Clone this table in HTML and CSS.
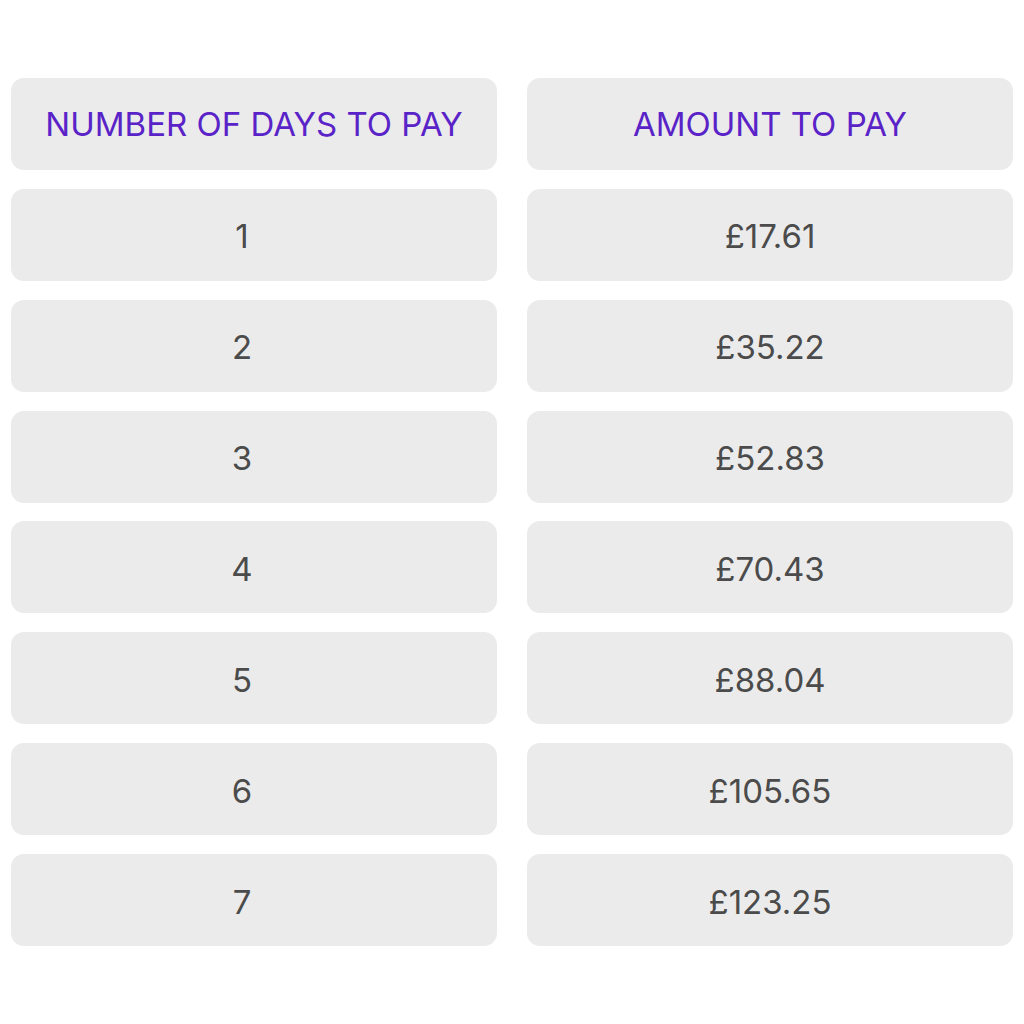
FILE: index.html
```html
<!DOCTYPE html>
<html lang="en">
<head>
<meta charset="utf-8">
<title>Payment table</title>
<link rel="stylesheet" href="styles.css">
</head>
<body>
<div class="table">
  <div class="cell head">NUMBER OF DAYS TO PAY</div>
  <div class="cell head">AMOUNT TO PAY</div>
  <div class="cell days">1</div>
  <div class="cell amt">£17.61</div>
  <div class="cell days">2</div>
  <div class="cell amt">£35.22</div>
  <div class="cell days">3</div>
  <div class="cell amt">£52.83</div>
  <div class="cell days">4</div>
  <div class="cell amt">£70.43</div>
  <div class="cell days">5</div>
  <div class="cell amt">£88.04</div>
  <div class="cell days">6</div>
  <div class="cell amt">£105.65</div>
  <div class="cell days">7</div>
  <div class="cell amt">£123.25</div>
</div>
</body>
</html>
```
FILE: styles.css
```css
html, body {
  margin: 0;
  padding: 0;
  background: #ffffff;
}
body {
  width: 1024px;
  height: 1024px;
  font-family: "Inter", "Noto Sans", sans-serif;
}
.table {
  display: grid;
  grid-template-columns: 486px 486px;
  grid-auto-rows: 92px;
  column-gap: 30px;
  row-gap: 18.86px;
  padding: 78px 0 0 11px;
}
.cell {
  background: #ebebeb;
  border-radius: 13px;
  display: flex;
  align-items: center;
  justify-content: center;
  color: #4b4b4b;
  font-size: 33px;
  font-weight: 400;
  padding-top: 3px;
  box-sizing: border-box;
}
.head {
  color: #5a23c8;
  font-size: 33px;
  padding-top: 0;
}
.days {
  padding-right: 24px;
}
```
